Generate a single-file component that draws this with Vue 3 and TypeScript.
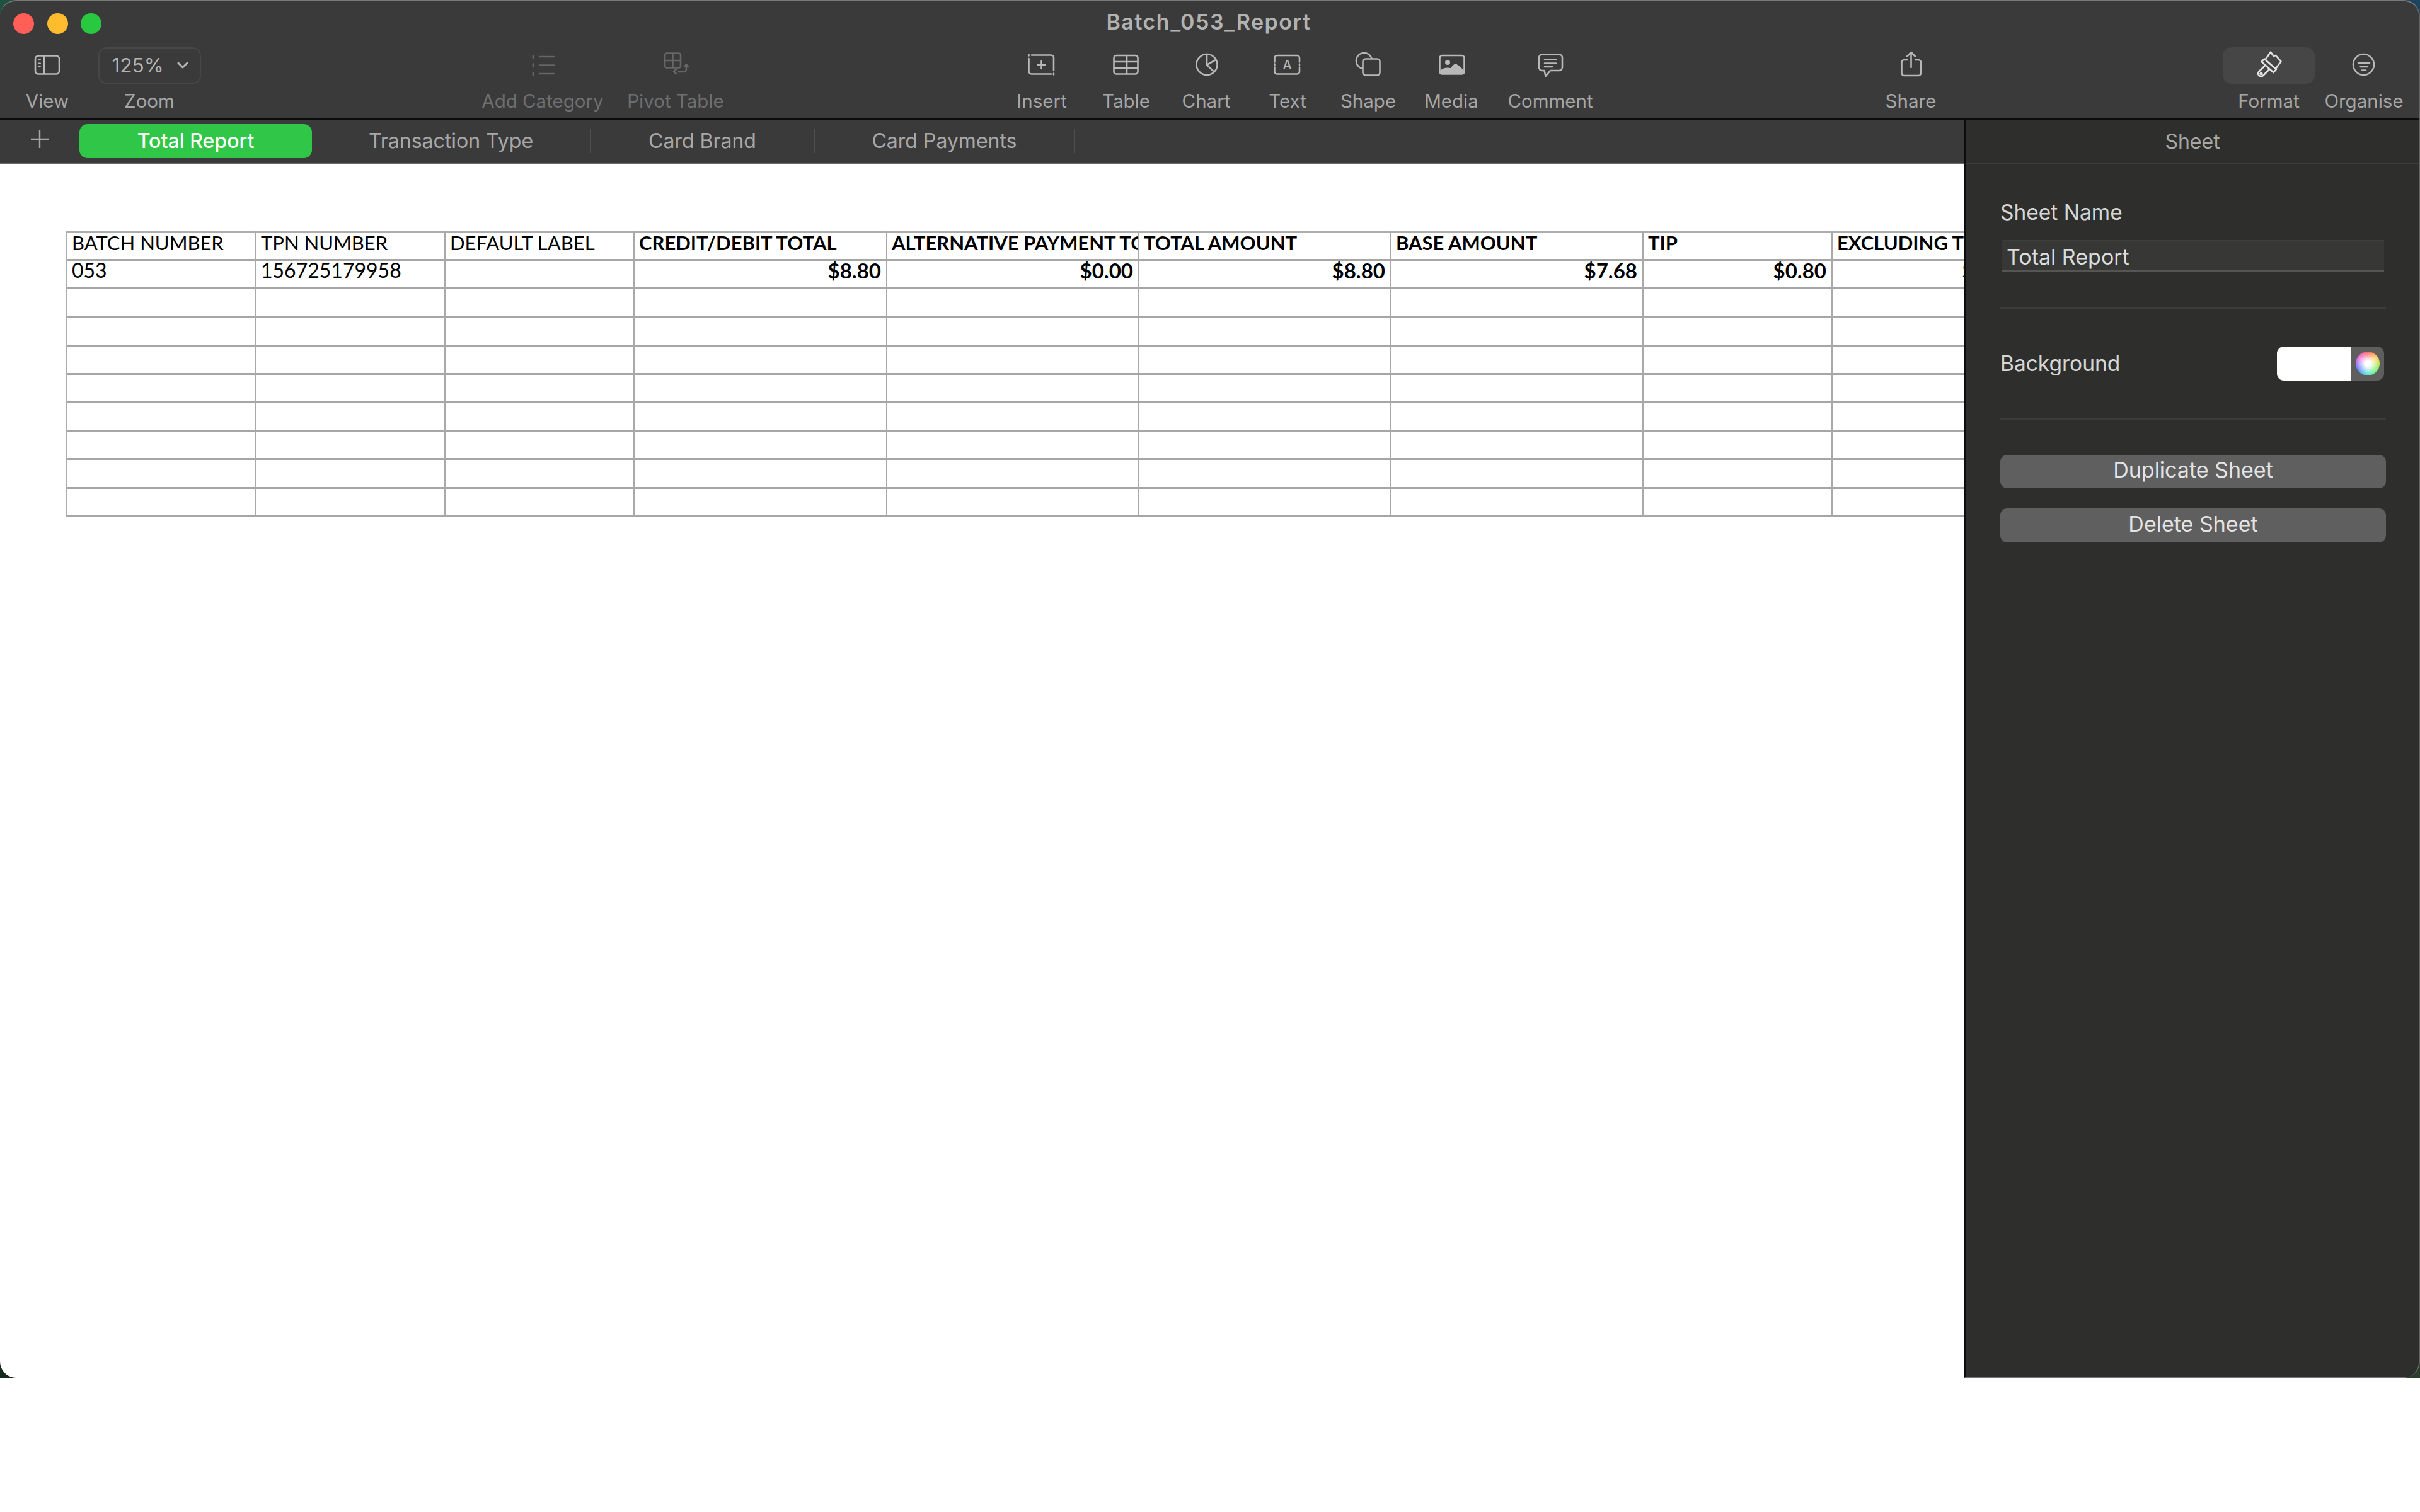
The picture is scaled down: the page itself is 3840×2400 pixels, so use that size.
<script setup lang="ts">
interface Column { head: string; value: string; strong: boolean }

const columns: Column[] = [
  { head: 'BATCH NUMBER', value: '053', strong: false },
  { head: 'TPN NUMBER', value: '156725179958', strong: false },
  { head: 'DEFAULT LABEL', value: '', strong: false },
  { head: 'CREDIT/DEBIT TOTAL', value: '$8.80', strong: true },
  { head: 'ALTERNATIVE PAYMENT TOTAL', value: '$0.00', strong: true },
  { head: 'TOTAL AMOUNT', value: '$8.80', strong: true },
  { head: 'BASE AMOUNT', value: '$7.68', strong: true },
  { head: 'TIP', value: '$0.80', strong: true },
  { head: 'EXCLUDING TIP', value: '$8.00', strong: true },
]
const emptyRows: number = 8
const tabs: string[] = ['Transaction Type', 'Card Brand', 'Card Payments']
</script>

<template>
  <div class="wallpaper">
    <div class="window">
      <header class="toolbar">
        <div class="title-row">
          <div class="lights">
            <span class="light red"></span>
            <span class="light amber"></span>
            <span class="light green"></span>
          </div>
          <div class="title">Batch_053_Report</div>
          <div></div>
        </div>
        <div class="tools">
          <div class="tool">
            <svg class="icon" viewBox="0 0 60 48">
              <rect x="11" y="8.5" width="38" height="29" rx="5" />
              <path d="M25 9V37" />
              <path class="thin" d="M16 15h3M16 20.5h3M16 26h3" />
            </svg>
            <span>View</span>
          </div>
          <div class="tool">
            <div class="zoom-box">
              <span class="zoom-value">125%</span>
              <svg class="chevron" viewBox="0 0 20 12"><path d="M3 2l7 7 7-7" /></svg>
            </div>
            <span>Zoom</span>
          </div>
          <div></div>
          <div class="tool off">
            <svg class="icon" viewBox="0 0 60 48">
              <path d="M25 10H48M25 23.5H48M25 37H48" />
              <path d="M15 8v4M15 21.5v4M15 35v4" />
            </svg>
            <span>Add Category</span>
          </div>
          <div class="tool off">
            <svg class="icon" viewBox="0 0 60 48">
              <rect x="13" y="4.5" width="25" height="23" rx="3" />
              <path d="M25.5 5V27M13.5 16H38" />
              <path d="M47 22V30a4 4 0 0 1-4 4H35M31 37l-4-3.500 4-3.500M44 26l3-4 3 4" />
            </svg>
            <span>Pivot Table</span>
          </div>
          <div></div>
          <div class="tool">
            <svg class="icon" viewBox="0 0 60 48">
              <path d="M14 7.500H45a4 4 0 0 1 4 4V32M45 37.500H14a4.500 4.500 0 0 1-4.500-4.500V13" />
              <path d="M9.500 6.500v2M49 36.500v2" />
              <path d="M23.500 23H35.500M29.500 17V29" />
            </svg>
            <span>Insert</span>
          </div>
          <div class="tool">
            <svg class="icon" viewBox="0 0 60 48">
              <rect x="10.500" y="8" width="38" height="29.500" rx="4" />
              <path d="M11 18H48M11 28H48M31 8V37" />
            </svg>
            <span>Table</span>
          </div>
          <div class="tool">
            <svg class="icon" viewBox="0 0 60 48">
              <circle cx="31" cy="22.500" r="16.500" />
              <path d="M31 6V23L41.500 33M31 23L45 15" />
            </svg>
            <span>Chart</span>
          </div>
          <div class="tool">
            <svg class="icon" viewBox="0 0 60 48">
              <path d="M9.500 18.500V12a4 4 0 0 1 4-4H45a4 4 0 0 1 4 4V18.500M49 26.500V33.500a4 4 0 0 1-4 4H13.500a4 4 0 0 1-4-4V26.500" />
              <path d="M9.500 21.500v2M49 21.500v2" />
              <text class="glyph" x="29.500" y="30" text-anchor="middle">A</text>
            </svg>
            <span>Text</span>
          </div>
          <div class="tool">
            <svg class="icon" viewBox="0 0 60 48">
              <circle cx="23.500" cy="16.500" r="12.500" />
              <rect class="cover" x="21.500" y="13.500" width="27" height="26" rx="4.500" />
            </svg>
            <span>Shape</span>
          </div>
          <div class="tool">
            <svg class="icon" viewBox="0 0 60 48">
              <rect x="11.500" y="8" width="39" height="29.500" rx="4" />
              <circle class="solid" cx="24" cy="19" r="4" />
              <path class="solid" d="M12 32Q18 27 24 27.500L29 28Q33 22 37 21Q44 25 50 32V34a4 4 0 0 1-4 4H16a4 4 0 0 1-4-4Z" />
            </svg>
            <span>Media</span>
          </div>
          <div class="tool">
            <svg class="icon" viewBox="0 0 60 48">
              <path d="M17 6.500H44a5 5 0 0 1 5 5V27a5 5 0 0 1-5 5H30L22.500 41 20.500 32H17a5 5 0 0 1-5-5V11.500a5 5 0 0 1 5-5Z" />
              <path d="M21 14.500H39M21 20.500H39M21 26H33" />
            </svg>
            <span>Comment</span>
          </div>
          <div></div>
          <div class="tool">
            <svg class="icon" viewBox="0 0 60 48">
              <path d="M24 15H19.500a4 4 0 0 0-4 4V36a4 4 0 0 0 4 4H42a4 4 0 0 0 4-4V19a4 4 0 0 0-4-4H37" />
              <path d="M30.500 27V3M24 9.500L30.500 3 37 9.500" />
            </svg>
            <span>Share</span>
          </div>
          <div></div>
          <div class="tool active">
            <div class="format-box">
              <svg class="icon bright" viewBox="0 0 60 48">
                <path d="M25 14L33 2.500 37.500 9 41 8 49.500 17.500 41 29" />
                <path d="M23 13.500L42 30 37.500 35 18.500 18Z" />
                <path d="M24 24L14.500 33.500a4.500 4.500 0 0 0 6.500 6.500L31 30" />
                <circle cx="18" cy="37" r="1.300" />
              </svg>
            </div>
            <span>Format</span>
          </div>
          <div class="tool">
            <svg class="icon" viewBox="0 0 60 48">
              <circle cx="29.500" cy="22.500" r="16.500" />
              <path d="M21 20H39M24.500 26H35.500M27 31.500H33" />
            </svg>
            <span>Organise</span>
          </div>
        </div>
      </header>

      <div class="body">
        <main class="main">
          <nav class="tabbar">
            <svg class="plus" viewBox="0 0 28 28"><path d="M14 0V28M0 14H28" /></svg>
            <div class="pill">Total Report</div>
            <div v-for="tab in tabs" :key="tab" class="tab">{{ tab }}</div>
          </nav>
          <section class="canvas">
            <div class="sheet">
              <div v-for="col in columns" :key="col.head" class="cell" :class="{ strong: col.strong }">{{ col.head }}</div>
              <div v-for="col in columns" :key="col.head + 'v'" class="cell value" :class="{ strong: col.strong, money: col.strong }">{{ col.value }}</div>
              <template v-for="r in emptyRows" :key="r">
                <div v-for="col in columns" :key="col.head" class="cell"></div>
              </template>
            </div>
          </section>
        </main>

        <aside class="inspector">
          <div class="panel-head">Sheet</div>
          <div class="panel-body">
            <div class="field-label">Sheet Name</div>
            <div class="input">Total Report</div>
            <div class="divider first"></div>
            <div class="bg-row">
              <span class="bg-label">Background</span>
              <div class="swatch">
                <span class="swatch-white"></span>
                <span class="swatch-well"><span class="wheel"></span></span>
              </div>
            </div>
            <div class="divider second"></div>
            <button class="btn dup" type="button">Duplicate Sheet</button>
            <button class="btn del" type="button">Delete Sheet</button>
          </div>
        </aside>
      </div>
    </div>
  </div>
</template>

<style>
html, body { margin: 0; background: #ffffff; }
</style>

<style scoped>
.wallpaper {
  width: 3840px;
  height: 2187px;
  background:
    linear-gradient(90deg, #205040, #1e4560) top / 100% 50% no-repeat,
    linear-gradient(90deg, #17291a, #2a3f2c) bottom / 100% 50% no-repeat;
  font-family: Inter, "Liberation Sans", sans-serif;
}
.window {
  box-sizing: border-box;
  width: 100%;
  height: 100%;
  display: flex;
  flex-direction: column;
  overflow: hidden;
  border-radius: 26px;
  border-top: 2px solid #7a7a7a;
  border-right: 2px solid #666666;
  background: #3a3a3a;
}
.toolbar {
  flex: none;
  height: 188px;
  box-sizing: border-box;
  background: #3a3a3a;
  border-bottom: 3px solid #0c0c0c;
}
.title-row {
  display: grid;
  grid-template-columns: 1fr auto 1fr;
  align-items: center;
  height: 73px;
  box-sizing: border-box;
  padding: 0 23px 7px 21px;
}
.lights { display: flex; gap: 20.5px; margin-top: 4px; }
.light { width: 33px; height: 33px; border-radius: 50%; }
.red { background: #ff5f57; }
.amber { background: #febc2e; }
.green { background: #28c840; }
.title {
  color: #b2b2b2;
  font-size: 34px;
  font-weight: 600;
  line-height: 42px;
  letter-spacing: 1.500px;
}
.tools {
  display: grid;
  grid-template-columns: 150px 174px 432px 210px 212px 408px 134px 134px 120px 138px 118px 146px 168px 408px 160px 415px 146px 156px;
  height: 112px;
}
.tool {
  display: flex;
  flex-direction: column;
  align-items: center;
  color: #a6a6a6;
  font-size: 29.500px;
  line-height: 40px;
  white-space: nowrap;
}
.tool > span { margin-top: 7px; }
.tool.off { color: #6f6f6f; }
.icon {
  display: block;
  width: 60px;
  height: 48px;
  margin: 5px 0;
  fill: none;
  stroke: #b8b8b8;
  stroke-width: 2.600;
  stroke-linecap: round;
  stroke-linejoin: round;
}
.off .icon { stroke: #666666; }
.icon .thin { stroke-width: 2; }
.icon .cover { fill: #3a3a3a; }
.icon .solid { fill: #b8b8b8; stroke: none; }
.icon .glyph {
  fill: #b8b8b8;
  stroke: none;
  font-family: Inter, sans-serif;
  font-size: 20px;
  font-weight: 500;
}
.icon.bright { stroke: #e4e4e4; }
.zoom-box {
  box-sizing: border-box;
  width: 163px;
  height: 58px;
  display: flex;
  align-items: center;
  padding-left: 20px;
  gap: 20px;
  border: 2px solid #474747;
  border-radius: 13px;
  color: #b4b4b4;
  font-size: 31.500px;
}
.chevron {
  width: 20px;
  height: 12px;
  fill: none;
  stroke: #b4b4b4;
  stroke-width: 3;
  stroke-linecap: round;
  stroke-linejoin: round;
}
.format-box {
  width: 146px;
  height: 58px;
  display: flex;
  justify-content: center;
  background: #464646;
  border-radius: 14px;
}
.body {
  flex: 1;
  min-height: 0;
  display: flex;
}
.main {
  flex: 1;
  min-width: 0;
  display: flex;
  flex-direction: column;
}
.tabbar {
  flex: none;
  height: 71px;
  box-sizing: border-box;
  display: flex;
  align-items: center;
  padding: 0 0 7px 49px;
  background: #3a3a3a;
  border-bottom: 2px solid #6c6c6c;
}
.plus {
  width: 28px;
  height: 28px;
  margin-right: 49px;
  fill: none;
  stroke: #a6a6a6;
  stroke-width: 2.400;
}
.pill {
  width: 369px;
  height: 54px;
  margin-top: 5px;
  border-radius: 13px;
  background: #30c748;
  color: #ffffff;
  font-size: 32px;
  font-weight: 500;
  line-height: 54px;
  text-align: center;
}
.tab {
  box-sizing: border-box;
  height: 39px;
  margin-top: 5px;
  color: #a8a8a8;
  font-size: 32px;
  line-height: 39px;
  text-align: center;
  white-space: nowrap;
  border-right: 2px solid #4e4e4e;
}
.tab:nth-of-type(2) { width: 443px; }
.tab:nth-of-type(3) { width: 355px; }
.tab:nth-of-type(4) { width: 413px; }
.canvas {
  flex: 1;
  min-height: 0;
  overflow: hidden;
  background: #ffffff;
  padding: 106px 0 0 105px;
}
.sheet {
  display: grid;
  grid-template-columns: 300px 300px 300px 401px 400px 400px 400px 300px 300px;
  grid-template-rows: 44px repeat(9, 45.200px);
  width: 3102px;
  border-left: 2px solid #adadad;
  border-top: 3px solid #adadad;
  font-family: Lato, "Liberation Sans", sans-serif;
  font-size: 31px;
  line-height: 38px;
  color: #000000;
}
.cell {
  box-sizing: border-box;
  overflow: hidden;
  white-space: nowrap;
  margin-top: -4px;
  padding: 0 8px 0 7px;
  border-right: 2px solid #a9a9a9;
  border-bottom: 3px solid #a6a6a6;
}
.cell.value { font-size: 32px; }
.cell.value.strong { font-size: 33px; line-height: 40px; margin-top: -5px; }
.strong { font-weight: 700; }
.money { text-align: right; }
.inspector {
  flex: none;
  width: 721px;
  box-sizing: border-box;
  display: flex;
  flex-direction: column;
  background: #2e2f2c;
  border-left: 3px solid #0c0c0c;
  border-bottom: 2px solid #777777;
}
.panel-head {
  flex: none;
  height: 71px;
  box-sizing: border-box;
  border-bottom: 2px solid #3d3e3b;
  color: #a8a8a8;
  font-size: 32px;
  line-height: 69px;
  text-align: center;
}
.panel-body {
  display: flex;
  flex-direction: column;
  padding: 56px 52px 0 54px;
}
.field-label, .bg-label {
  color: #d6d6d6;
  font-size: 33.500px;
  line-height: 41px;
}
.input {
  box-sizing: border-box;
  height: 50px;
  margin: 23px 3px 0 2px;
  padding-left: 8px;
  background: #373835;
  border-top: 1px solid #3d3e3b;
  border-bottom: 2px solid #555653;
  color: #dcdcdc;
  font-size: 34px;
  line-height: 47px;
  padding-top: 2px;
}
.divider { height: 3px; background: #3b3c39; }
.divider.first { margin-top: 57px; }
.divider.second { margin-top: 59px; }
.bg-row {
  display: flex;
  align-items: center;
  justify-content: space-between;
  height: 54px;
  margin-top: 59px;
  padding-right: 3px;
}
.swatch {
  display: flex;
  width: 170px;
  height: 54px;
  border-radius: 11px;
  overflow: hidden;
}
.swatch-white { width: 117px; background: #ffffff; }
.swatch-well {
  flex: 1;
  display: flex;
  align-items: center;
  justify-content: center;
  background: #5e5e5e;
}
.wheel {
  width: 38px;
  height: 38px;
  border-radius: 50%;
  background:
    radial-gradient(circle, #ffffff 15%, rgba(255, 255, 255, 0) 72%),
    conic-gradient(#ff5a5a, #ffd24a, #7cf05a, #4ae0d0, #5a7cff, #e060e0, #ff5a5a);
}
.btn {
  border: none;
  display: block;
  width: 100%;
  background: #5f5f5f;
  border-radius: 11px;
  color: #e4e4e4;
  font-family: inherit;
  font-size: 34px;
  padding: 0 0 6px;
}
.btn.dup { height: 53px; margin-top: 56px; }
.btn.del { height: 54px; margin-top: 32px; }
</style>
